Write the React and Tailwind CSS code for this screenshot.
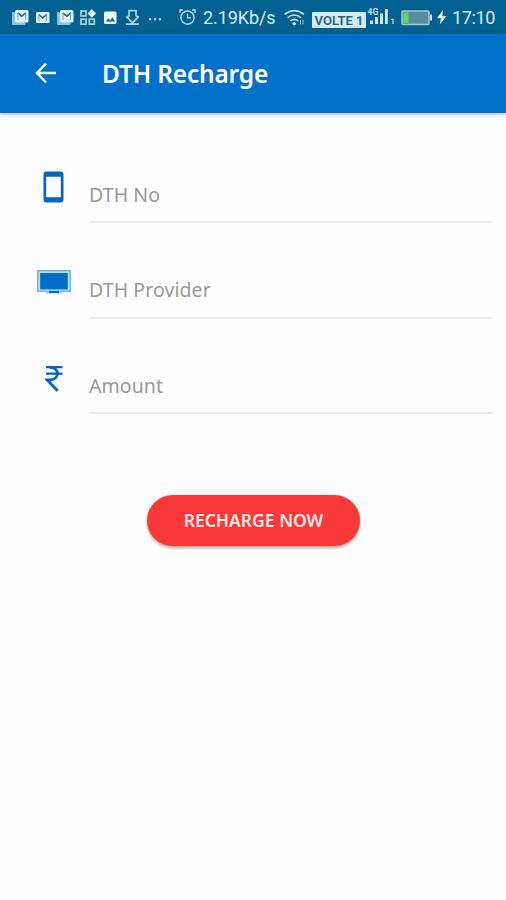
import React from "react";

// Status bar glyphs share one vertical coordinate system: the 34px bar.
function Glyph({ x, w, className = "", children }) {
  return (
    <svg width={w} height="34" viewBox={`${x} 0 ${w} 34`} className={`shrink-0 overflow-visible ${className}`} fill="none">
      {children}
    </svg>
  );
}

function StackedMail({ className }) {
  return (
    <Glyph x={0} w={18} className={className}>
      <path d="M3.5 12.5H1.5V24.5h12.5v-2" fill="#8fc3d8" stroke="#8fc3d8" strokeWidth="1" />
      <rect x="4" y="10" width="13.5" height="12.5" rx="1.5" fill="#dff3f8" />
      <path d="M6.8 12.8l4 3.4 4-3.4" stroke="#17688a" strokeWidth="1.6" />
      <path d="M7 13v7M14.6 13v7" stroke="#6fa9be" strokeWidth="1" />
    </Glyph>
  );
}

function StatusBar() {
  return (
    <div className="flex h-[34px] shrink-0 items-center bg-[#00608f] pl-[11px] font-['Roboto',sans-serif] text-[#d9edf5]">
      <StackedMail />
      <Glyph x={36} w={13} className="ml-[7px]">
        <rect x="36" y="12" width="13.5" height="11" rx="1.2" fill="#dff3f8" />
        <path d="M38.7 14.6l4 3.2 4-3.2" stroke="#17688a" strokeWidth="1.6" />
        <path d="M38.8 15v6M46.6 15v6" stroke="#6fa9be" strokeWidth="1" />
      </Glyph>
      <StackedMail className="ml-[7px]" />
      <Glyph x={80} w={16} className="ml-[6px]">
        <g stroke="#a9d3e2" strokeWidth="1.7">
          <rect x="81" y="11" width="5" height="5" />
          <rect x="81" y="19.2" width="5" height="5" />
          <rect x="89.3" y="19.2" width="5" height="5" />
        </g>
        <path d="M91.8 9l4.2 4.4-4.2 4.4-4.2-4.4z" fill="#edf9fb" />
      </Glyph>
      <Glyph x={104} w={13} className="ml-[8px]">
        <rect x="104" y="11.5" width="12.5" height="12.5" rx="1.5" fill="#edf9fb" />
        <path d="M105.7 21.5l2.6-3.3 1.8 2 2.4-3 2.5 4.3z" fill="#17688a" />
      </Glyph>
      <Glyph x={125} w={15} className="ml-[8px]">
        <path d="M129 10.7h7v5l2.2 1.2-5.7 6-5.7-6 2.2-1.2zM126 24.2h13" stroke="#a9d3e2" strokeWidth="1.7" />
      </Glyph>
      <Glyph x={149} w={12} className="ml-[9px]">
        <path d="M149 18.2h2.2v2H149zM153.9 18.2h2.2v2h-2.2zM158.8 18.2h2.2v2h-2.2z" fill="#c3e0ea" />
      </Glyph>
      <Glyph x={179} w={17} className="ml-[18px]">
        <circle cx="187.5" cy="17.6" r="6.6" stroke="#b9dbe8" strokeWidth="1.5" />
        <path d="M187.5 13.8v4h3.3M180 13v-3h3M195 13v-3h-3" stroke="#b9dbe8" strokeWidth="1.4" />
      </Glyph>
      <span className="ml-[7px] w-[73px] shrink-0 whitespace-nowrap text-[18px] leading-[34px] tracking-[-0.08px]">
        <span className="relative top-[1px]">2.19Kb/s</span>
      </span>
      <Glyph x={284} w={21} className="ml-[8px]">
        <g stroke="#c7e3ed" strokeWidth="1.7">
          <path d="M284.7 14.2q9.6-7.2 19.2 0" />
          <path d="M287.6 17.6q6.7-5.2 13.4 0" />
          <path d="M290.5 20.9q3.8-3 7.6 0" />
        </g>
        <circle cx="294.3" cy="23.6" r="1.7" fill="#d9edf5" />
        <path d="M300.5 20v4.5M303 24.5V20" stroke="#9bcadb" />
      </Glyph>
      <span className="ml-[7px] mt-[6px] flex h-[16px] w-[54px] shrink-0 items-center justify-center whitespace-nowrap rounded-[1px] bg-[#d5e9f2] pt-[1px] font-['Roboto',sans-serif] text-[13px] font-semibold leading-[16px] tracking-[0px] text-[#226681]">
        VOLTE 1
      </span>
      <Glyph x={368} w={20} className="ml-[2px]">
        <path d="M370 20.5h3V24h-3zM375 17h3v7h-3zM380 13.5h3V24h-3zM385 9h2.8v15H385z" fill="#d1e8f0" />
        <text x="367.5" y="14.5" fill="#c3e0ea" fontSize="8.5" fontWeight="700" fontFamily="Roboto, sans-serif">4G</text>
      </Glyph>
      <Glyph x={391} w={4} className="ml-[3px]">
        <path d="M391 19.3h2V24" stroke="#b9dbe8" strokeWidth="1.3" />
      </Glyph>
      <Glyph x={401} w={31} className="ml-[6px]">
        <rect x="402" y="11" width="27" height="13.5" rx="1" fill="#558f9f" stroke="#a9c6c8" strokeWidth="1.5" />
        <rect x="403.5" y="12.5" width="5" height="10.5" fill="#5ed569" />
        <path d="M430 14.5h2v6h-2z" fill="#d5e9f2" />
      </Glyph>
      <Glyph x={437} w={9} className="ml-[5px]">
        <path d="M443 10l-6 8.3h4l-1.3 6.3 6.6-8.4h-4z" fill="#f2fbfc" />
      </Glyph>
      <span className="ml-[6px] whitespace-nowrap text-[18px] leading-[34px] tracking-[-0.35px]">
        <span className="relative top-[1px]">17:10</span>
      </span>
    </div>
  );
}

function AppBar() {
  return (
    <header className="flex h-[79px] shrink-0 items-center bg-[#0070cb] pl-[35px] text-white shadow-[0_1px_4px_rgba(40,50,90,0.4)]">
      <svg width="22" height="22" viewBox="0 0 22 22" fill="none" stroke="#f3fbff" strokeWidth="2.5" className="mb-[2px]">
        <path d="M11 1.5L2 11l9 9.5M2 11h19" />
      </svg>
      <h1 className="ml-[45px] whitespace-nowrap font-['Noto_Sans','Open_Sans',sans-serif] text-[24.5px] font-semibold leading-[34px] tracking-[-0.2px]">
        DTH Recharge
      </h1>
    </header>
  );
}

function PhoneIcon() {
  return (
    <svg width="22" height="32" viewBox="0 0 22 32" className="mt-[0.5px]">
      <path fillRule="evenodd" fill="#0068b7" d="M3.5 0.5h14a3 3 0 0 1 3 3v25a3 3 0 0 1-3 3h-14a3 3 0 0 1-3-3v-25a3 3 0 0 1 3-3zM3.2 5.7v20.6h14.6V5.7z" />
    </svg>
  );
}

function TvIcon() {
  return (
    <svg width="34" height="32" viewBox="0 0 34 32">
      <rect x="0.7" y="0.7" width="32.6" height="20.6" fill="#b4dff0" stroke="#6fb0d2" strokeWidth="1.3" />
      <rect x="3.2" y="3" width="27.6" height="16.4" fill="#006dc8" />
      <path d="M8 23.5h18l-3-1.9H11z" fill="#9dcde0" />
      <path d="M12 21h10v2H12z" fill="#0068b7" />
    </svg>
  );
}

function RupeeIcon() {
  return (
    <svg width="18" height="32" viewBox="0 0 18 32" fill="none" stroke="#0068b7">
      <path d="M1 6.2h16.5M1 12.7h16.5" strokeWidth="2.3" />
      <path d="M4.5 6.2c10.5 0 10.5 12.8 0 12.8H2.2L12.6 29.8" strokeWidth="2.9" />
    </svg>
  );
}

function Field({ icon, label }) {
  return (
    <div className="flex h-[95.5px]">
      <div className="flex h-[32px] w-[34px] shrink-0 justify-center">{icon}</div>
      <div className="ml-[18px] h-[53px] w-[403px] border-b-2 border-[#e9e9e9] pt-[10.6px]">
        <span className="block whitespace-nowrap font-['Noto_Sans','Open_Sans',sans-serif] text-[19.5px] leading-[28px] tracking-[0.08px] text-[#999999]">
          {label}
        </span>
      </div>
    </div>
  );
}

export default function App() {
  return (
    <div className="flex h-[900px] w-[506px] flex-col overflow-hidden bg-[#fefefe]">
      <StatusBar />
      <AppBar />
      <main className="flex flex-col pl-[37px] pt-[57px]">
        <Field icon={<PhoneIcon />} label="DTH No" />
        <Field icon={<div className="pt-[4px]"><TvIcon /></div>} label="DTH Provider" />
        <Field icon={<RupeeIcon />} label="Amount" />
        <button className="ml-[110px] mt-[38.5px] flex h-[51px] w-[213px] items-center justify-center whitespace-nowrap rounded-full bg-[#f93838] font-['Noto_Sans','Open_Sans',sans-serif] text-[17.5px] font-semibold text-[#ffeaea] shadow-[0_2px_3px_rgba(70,30,30,0.4)]">
          RECHARGE NOW
        </button>
      </main>
    </div>
  );
}
